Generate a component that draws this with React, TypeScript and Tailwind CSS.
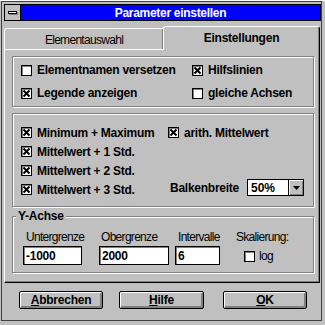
import React from 'react';

const Check: React.FC<{ checked?: boolean }> = ({ checked }) => (
  <span className="w-[11px] h-[11px] shrink-0 bg-white border border-black shadow-[inset_1px_1px_0_#808080] flex items-center justify-center">
    {checked && (
      <svg width="9" height="9" viewBox="0 0 9 9">
        <path d="M1.5 1.5 L7.5 7.5 M7.5 1.5 L1.5 7.5" stroke="black" strokeWidth="2" />
      </svg>
    )}
  </span>
);

const CheckRow: React.FC<{ label: string; checked?: boolean; h: string }> = ({ label, checked, h }) => (
  <div className={`flex items-center gap-[5px] ${h}`}>
    <Check checked={checked} />
    <span className="font-bold tracking-[-0.25px]">{label}</span>
  </div>
);

const Button: React.FC<{ first: string; rest: string; w: string; className?: string }> = ({ first, rest, w, className = '' }) => (
  <button className={`${w} h-[18px] border border-black rounded-[2px] bg-[#c0c0c0] shadow-[inset_1px_1px_0_#fff,inset_-2px_-2px_0_#808080] flex items-center justify-center font-bold tracking-[-0.25px] ${className}`}>
    <span>
      <span className="underline underline-offset-[1px]">{first}</span>
      {rest}
    </span>
  </button>
);

const groupBox = 'border border-[#808080] shadow-[inset_1px_1px_0_#fff,1px_1px_0_#fff]';
// regular labels: the dialog font is narrow, so squeeze Liberation Sans a little
const narrow = 'text-[12px] tracking-[-0.7px]';

export default function App() {
  return (
    <div className="w-[325px] h-[325px] bg-[#c0c0c0] text-black text-[12px] leading-none font-['Liberation_Sans',Arial,sans-serif]">
      <div className="ml-[1px] mt-[1px] w-[321px] h-[320px] border border-[#404040] pl-[2px] pt-[2px] flex flex-col">
        {/* title bar */}
        <div className="flex h-[17px]">
          <div className="w-[17px] h-[17px] border border-black bg-[#c0c0c0] flex items-center justify-center">
            <span className="w-[9px] h-[3px] bg-white border border-black shadow-[1px_1px_0_#808080]" />
          </div>
          <div className="flex-1 bg-[#0000ff] border border-l-0 border-black flex items-center justify-center">
            <span className="text-white font-bold tracking-[-0.3px] text-[12px]">Parameter einstellen</span>
          </div>
        </div>

        {/* tabs */}
        <div className="flex items-end h-[24px] mt-[5px] pr-[1px]">
          <div className={`w-[159px] h-[22px] border-t border-l border-b border-white rounded-tl-[3px] shadow-[inset_-1px_0_0_#808080] flex items-center justify-center pt-[1px] ${narrow}`}>
            Elementauswahl
          </div>
          <div className="flex-1 h-[24px] border-t border-l border-white border-r border-r-black rounded-t-[3px] shadow-[inset_-1px_0_0_#808080] flex items-center justify-center font-bold tracking-[-0.25px] pb-[1px]">
            Einstellungen
          </div>
        </div>

        {/* panel */}
        <div className="mr-[1px] h-[233px] border-l border-white border-r border-r-black border-b border-b-black shadow-[inset_-1px_-1px_0_#808080] pl-[7px] pr-[5px] pt-[6px]">
          <div className={`${groupBox} h-[51px] pl-[8px] pt-[3px] grid grid-cols-[171px_1fr]`}>
            <CheckRow label="Elementnamen versetzen" h="h-[20px]" />
            <CheckRow label="Hilfslinien" checked h="h-[20px]" />
            <CheckRow label="Legende anzeigen" checked h="h-[20px]" />
            <CheckRow label="gleiche Achsen" h="h-[20px]" />
          </div>

          <div className={`${groupBox} h-[94px] mt-[6px] pl-[8px] pt-[9px] flex`}>
            <div className="w-[147px] flex flex-col">
              <CheckRow label="Minimum + Maximum" checked h="h-[19px]" />
              <CheckRow label="Mittelwert + 1 Std." checked h="h-[19px]" />
              <CheckRow label="Mittelwert + 2 Std." checked h="h-[19px]" />
              <CheckRow label="Mittelwert + 3 Std." checked h="h-[19px]" />
            </div>
            <div className="flex-1 flex flex-col pb-[10px]">
              <CheckRow label="arith. Mittelwert" checked h="h-[19px]" />
              <div className="flex-1" />
              <div className="flex items-center h-[17px]">
                <span className="ml-[2px] w-[77px] font-bold tracking-[-0.25px]">Balkenbreite</span>
                <div className="w-[57px] h-[17px] bg-white border border-black flex items-center">
                  <span className="flex-1 pl-[3px] font-bold">50%</span>
                  <span className="w-[15px] h-[15px] bg-[#c0c0c0] border-l border-black shadow-[inset_1px_1px_0_#fff,inset_-1px_-1px_0_#808080] flex items-center justify-center">
                    <svg width="7" height="4" viewBox="0 0 7 4">
                      <path d="M0 0 H7 L3.5 4 Z" fill="black" />
                    </svg>
                  </span>
                </div>
              </div>
            </div>
          </div>

          <div className={`${groupBox} relative h-[57px] mt-[9px] pl-[10px] pt-[13px]`}>
            <span className="absolute left-[3px] top-[-7px] px-[2px] bg-[#c0c0c0] font-bold tracking-[-0.25px]">Y-Achse</span>
            <div className="flex">
              <div className="w-[59px] flex flex-col">
                <span className={`pl-[3px] h-[14px] flex items-center ${narrow}`}>Untergrenze</span>
                <div className="mt-[2px] h-[19px] bg-white border border-black shadow-[inset_1px_1px_0_#808080] flex items-center pl-[2px] font-bold tracking-[-0.25px]">-1000</div>
              </div>
              <div className="w-[70px] ml-[17px] flex flex-col">
                <span className={`pl-[2px] h-[14px] flex items-center ${narrow}`}>Obergrenze</span>
                <div className="mt-[2px] h-[19px] bg-white border border-black shadow-[inset_1px_1px_0_#808080] flex items-center pl-[2px] font-bold tracking-[-0.25px]">2000</div>
              </div>
              <div className="w-[45px] ml-[6px] flex flex-col">
                <span className={`pl-[3px] h-[14px] flex items-center ${narrow}`}>Intervalle</span>
                <div className="mt-[2px] h-[19px] bg-white border border-black shadow-[inset_1px_1px_0_#808080] flex items-center pl-[2px] font-bold tracking-[-0.25px]">6</div>
              </div>
              <div className="ml-[16px] flex flex-col">
                <span className={`h-[14px] flex items-center ${narrow}`}>Skalierung:</span>
                <div className="mt-[6px] ml-[8px] flex items-center gap-[4px]">
                  <Check />
                  <span className={narrow}>log</span>
                </div>
              </div>
            </div>
          </div>
        </div>

        {/* buttons */}
        <div className="flex mt-[8px] pl-[15px]">
          <Button first="A" rest="bbrechen" w="w-[84px]" />
          <Button first="H" rest="ilfe" w="w-[85px]" className="ml-[16px]" />
          <Button first="O" rest="K" w="w-[84px]" className="ml-[19px]" />
        </div>
      </div>
    </div>
  );
}
